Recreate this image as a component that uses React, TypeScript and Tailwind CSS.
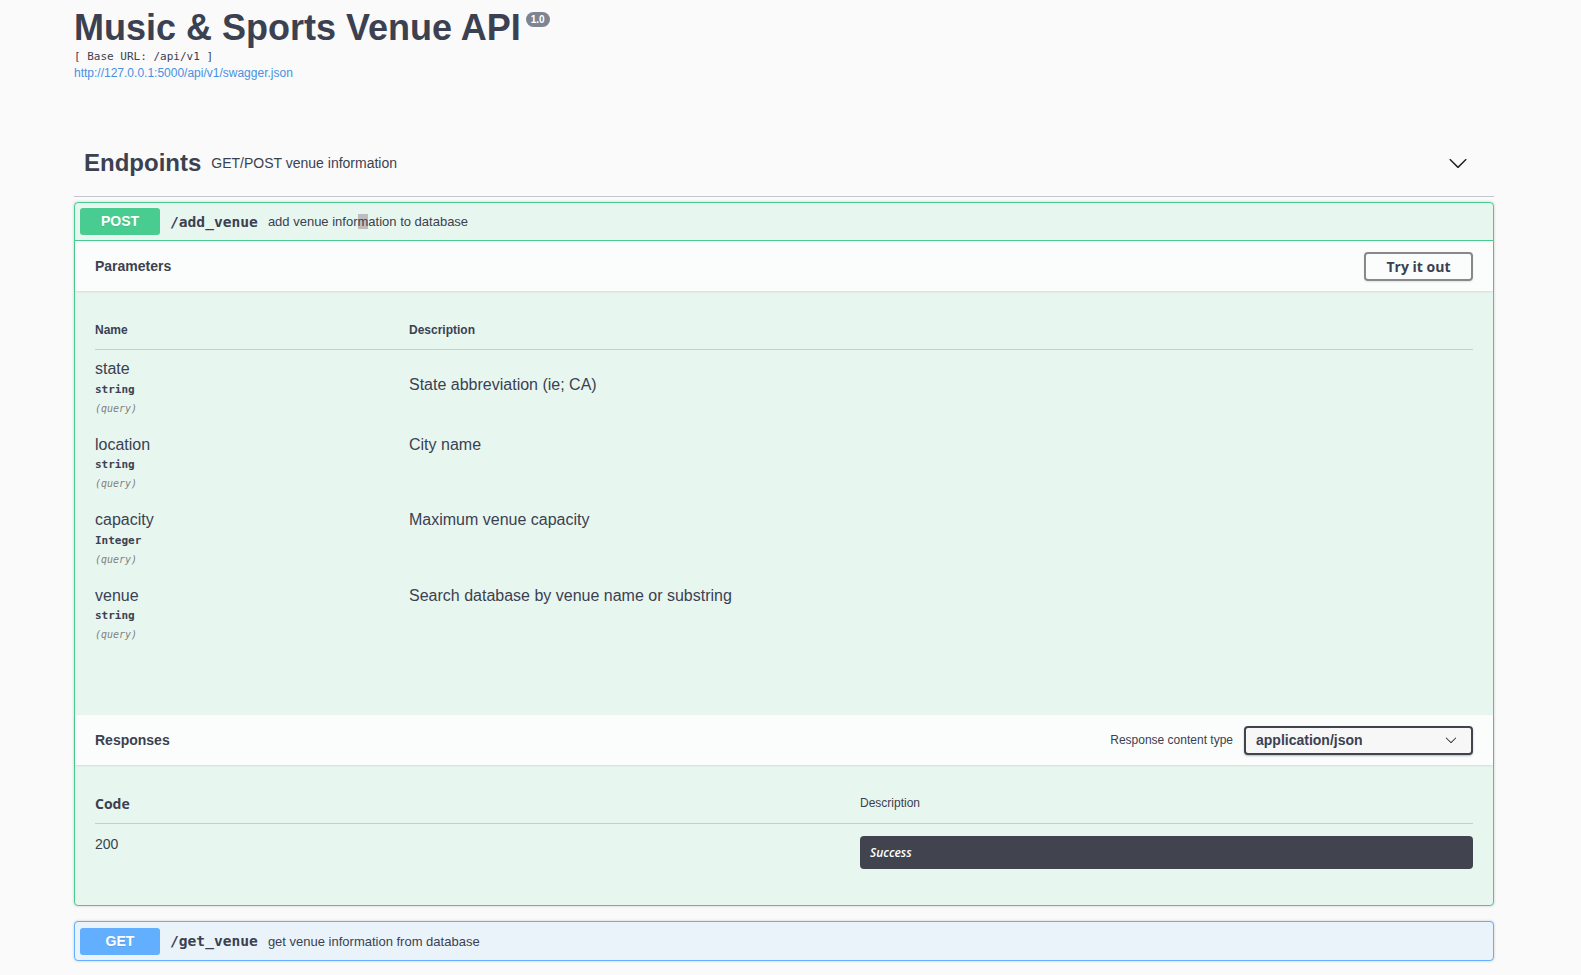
import React from "react";

const params = [
  { name: "state", type: "string", desc: "State abbreviation (ie; CA)", first: true },
  { name: "location", type: "string", desc: "City name", first: false },
  { name: "capacity", type: "Integer", desc: "Maximum venue capacity", first: false },
  { name: "venue", type: "string", desc: "Search database by venue name or substring", first: false },
];

const Chevron = ({ className }: { className: string }) => (
  <svg className={className} viewBox="0 0 20 20" fill="currentColor">
    <path d="M17.418 6.109c.272-.268.709-.268.979 0s.271.701 0 .969l-7.908 7.83c-.27.268-.707.268-.979 0l-7.908-7.83c-.27-.268-.27-.701 0-.969.271-.268.709-.268.979 0L10 13.25l7.418-7.141z" />
  </svg>
);

const MethodBadge = ({ label, color }: { label: string; color: string }) => (
  <div
    className={`flex h-[27px] w-[80px] items-center justify-center rounded-[3px] text-[14px] font-bold text-white [text-shadow:0_1px_0_rgba(0,0,0,0.1)] ${color}`}
  >
    {label}
  </div>
);

export default function App() {
  return (
    <div className="h-[975px] overflow-hidden bg-[#fafafa] font-['Liberation_Sans',Arial,sans-serif] text-[#3b4151]">
      <div className="ml-[74px] w-[1420px]">
        {/* info */}
        <div className="flex h-[46px] items-start pt-[10px]">
          <h1 className="text-[36px] font-bold leading-[36px] text-[#3b4151]">Music &amp; Sports Venue API</h1>
          <span className="ml-[5px] mt-[2px] rounded-full bg-[#7d8492] px-[5px] py-[2px] text-[10px] font-bold leading-[11px] text-white">
            1.0
          </span>
        </div>
        <div className="mt-[3px] h-[16px] font-['DejaVu_Sans_Mono',monospace] text-[11px] leading-[16px]">[ Base URL: /api/v1 ]</div>
        <div className="h-[16px] text-[12px] leading-[16px] text-[#4990e2]">http://127.0.0.1:5000/api/v1/swagger.json</div>

        {/* tag */}
        <div className="mt-[49px] flex h-[67px] items-center border-b border-[#c4c6cb] pl-[10px]">
          <span className="text-[24px] font-bold">Endpoints</span>
          <span className="px-[10px] text-[14px]">GET/POST venue information</span>
          <div className="flex-1" />
          <Chevron className="mr-[26px] h-[20px] w-[20px] text-[#222]" />
        </div>

        {/* POST block */}
        <div className="mt-[5px] rounded-[4px] border border-[#49cc90] bg-[#e8f6f0] shadow-[0_0_3px_rgba(0,0,0,0.19)]">
          <div className="flex h-[38px] items-center border-b border-[#49cc90] px-[5px]">
            <MethodBadge label="POST" color="bg-[#49cc90]" />
            <span className="pl-[10px] font-['DejaVu_Sans_Mono',monospace] text-[14.6px] font-bold">/add_venue</span>
            <span className="pl-[10px] text-[13px]">
              add venue infor<span className="bg-[#bdbdbd]">m</span>ation to database
            </span>
          </div>

          {/* parameters header */}
          <div className="flex h-[50px] items-center justify-between bg-[#fafdfc] px-[20px] shadow-[0_1px_2px_rgba(0,0,0,0.1)]">
            <span className="text-[14px] font-bold">Parameters</span>
            <button className="flex h-[29px] w-[109px] items-center justify-center rounded-[4px] border-2 border-[#888] bg-transparent font-['Open_Sans',sans-serif] text-[14px] font-bold shadow-[0_1px_2px_rgba(0,0,0,0.1)]">
              Try it out
            </button>
          </div>

          <div className="px-[20px] pt-[20px] pb-[63px]">
            <div className="flex border-b border-[#c6cfcd] py-[12px] text-[12px] font-bold leading-[14px]">
              <div className="w-[314px]">Name</div>
              <div>Description</div>
            </div>
            {params.map((p) => (
              <div key={p.name} className="flex">
                <div className="w-[314px] py-[10px]">
                  <div className="text-[16px] leading-[17.6px]">{p.name}</div>
                  <div className="py-[5px] font-['DejaVu_Sans_Mono',monospace] text-[11px] font-bold leading-[14px]">{p.type}</div>
                  <div className="font-['DejaVu_Sans_Mono',monospace] text-[10px] italic leading-[14px] text-[#808080]">(query)</div>
                </div>
                <div className={`text-[16px] leading-[17.6px] ${p.first ? "pt-[26px]" : "pt-[10px]"}`}>{p.desc}</div>
              </div>
            ))}
          </div>

          {/* responses header */}
          <div className="flex h-[50px] items-center justify-between bg-[#fafdfc] px-[20px] shadow-[0_1px_2px_rgba(0,0,0,0.1)]">
            <span className="text-[14px] font-bold">Responses</span>
            <div className="flex items-center">
              <span className="mr-[11px] text-[12px]">Response content type</span>
              <div className="flex h-[29px] w-[229px] items-center justify-between rounded-[4px] border-2 border-[#41444e] bg-[#f7f7f7] pl-[10px] pr-[14px] text-[14px] font-bold shadow-[0_1px_2px_rgba(0,0,0,0.25)]">
                application/json
                <Chevron className="h-[12px] w-[12px] text-[#222]" />
              </div>
            </div>
          </div>

          <div className="px-[20px] pt-[19px] pb-[36px]">
            <div className="flex items-center border-b border-[#c6cfcd] py-[12px] leading-[15px]">
              <div className="w-[765px] font-['Open_Sans',sans-serif] text-[14px] font-bold">Code</div>
              <div className="text-[12px]">Description</div>
            </div>
            <div className="flex pt-[12px]">
              <div className="w-[765px] text-[14px] leading-[16px]">200</div>
              <div className="flex h-[33px] flex-1 items-center rounded-[4px] bg-[#41444e] px-[10px] font-['Open_Sans',sans-serif] text-[12px] font-semibold italic text-white">
                Success
              </div>
            </div>
          </div>
        </div>

        {/* GET block */}
        <div className="mt-[15px] rounded-[4px] border border-[#61affe] bg-[#ebf3fa] shadow-[0_0_3px_rgba(0,0,0,0.19)]">
          <div className="flex h-[38px] items-center px-[5px]">
            <MethodBadge label="GET" color="bg-[#61affe]" />
            <span className="pl-[10px] font-['DejaVu_Sans_Mono',monospace] text-[14.6px] font-bold">/get_venue</span>
            <span className="pl-[10px] text-[13px]">get venue information from database</span>
          </div>
        </div>
      </div>
    </div>
  );
}
